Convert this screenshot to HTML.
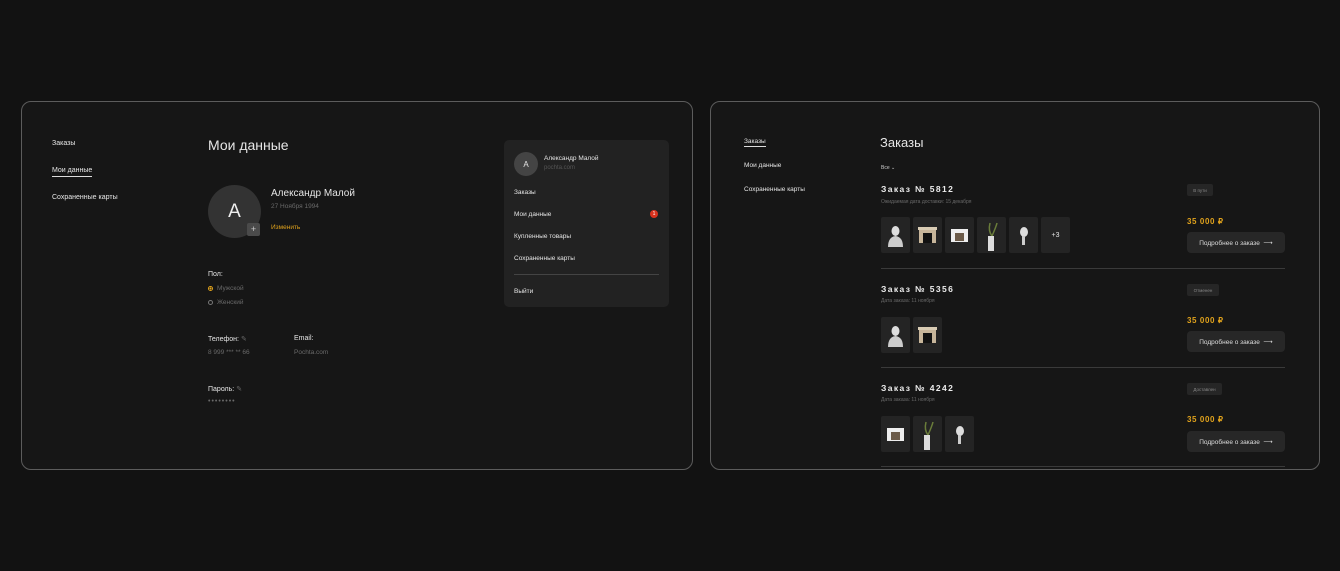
<!DOCTYPE html>
<html><head><meta charset="utf-8"><style>
*{margin:0;padding:0;box-sizing:border-box}
body{width:1340px;height:571px;background:#121212;font-family:"Liberation Sans","Noto Sans CJK SC",sans-serif;color:#e6e6e6;position:relative;overflow:hidden}
.p{position:absolute;background:#161616;border:1px solid #5c5c5c;border-radius:10px;overflow:hidden}
.a{position:absolute;white-space:nowrap}
.s{font-size:7px}
.g{color:#6a6a6a}
.th{position:absolute;width:29px;height:36px;background:#242424;border-radius:2px}
.th svg{width:29px;height:36px}
.btn{position:absolute;width:98px;height:21px;background:#272727;border-radius:4px;font-size:6.5px;color:#ddd;display:flex;align-items:center;justify-content:center}
.tag{position:absolute;height:12px;background:#262626;border-radius:2px;font-size:4.5px;color:#888;display:flex;align-items:center;justify-content:center}
.price{position:absolute;color:#e0a21c;font-size:8px;font-weight:bold;letter-spacing:0.6px}
.ord{position:absolute;font-size:8.5px;font-weight:bold;letter-spacing:1.4px;color:#eee}
.hr{position:absolute;height:1px;background:#3a3a3a}
</style></head><body>
<svg width="0" height="0" style="position:absolute"><defs>
<g id="bust"><ellipse cx="14.5" cy="14" rx="4" ry="5" fill="#ddd"/><path d="M7 30 Q7 20 14.5 19 Q22 20 22 30 Z" fill="#ccc"/></g>
<g id="fp1"><rect x="6" y="11" width="17" height="15" fill="#c7b59a"/><rect x="5" y="10" width="19" height="3" fill="#d9ccb4"/><rect x="10" y="16" width="9" height="10" fill="#111"/></g>
<g id="fp2"><rect x="6" y="12" width="17" height="13" fill="#eee"/><rect x="10" y="16" width="9" height="8" fill="#6b5a48"/></g>
<g id="vase"><path d="M13 6 Q11 14 15 19 M15 19 Q19 10 20 6" stroke="#6a7d3a" stroke-width="1.5" fill="none"/><rect x="11" y="19" width="6" height="15" fill="#ddd"/></g>
<g id="head"><ellipse cx="15" cy="15" rx="4" ry="5" fill="#ddd"/><rect x="13" y="19" width="3" height="9" fill="#ccc"/></g>
</defs></svg>

<div class="p" style="left:21px;top:101px;width:672px;height:369px">
 <div class="a s" style="left:30px;top:38px">Заказы</div>
 <div class="a s" style="left:30px;top:65px;border-bottom:1px solid #ddd;padding-bottom:2px">Мои данные</div>
 <div class="a s" style="left:30px;top:92px">Сохраненные карты</div>
 <div class="a" style="left:186px;top:35px;font-size:14px">Мои данные</div>
 <div class="a" style="left:186px;top:83px;width:53px;height:53px;border-radius:50%;background:#333;font-size:19px;color:#eee;display:flex;align-items:center;justify-content:center">A</div>
 <div class="a" style="left:225px;top:121px;width:13px;height:13px;border-radius:2px;background:#4a4a4a;font-size:9px;color:#ccc;text-align:center;line-height:13px">+</div>
 <div class="a" style="left:249px;top:86px;font-size:10px">Александр Малой</div>
 <div class="a g" style="left:249px;top:101px;font-size:6.5px">27 Ноября 1994</div>
 <div class="a" style="left:249px;top:122px;font-size:6.5px;color:#e0a21c">Изменить</div>
 <div class="a s" style="left:186px;top:169px">Пол:</div>
 <div class="a" style="left:186px;top:184px;width:5px;height:5px;border-radius:50%;border:1px solid #e0a21c;background:radial-gradient(#e0a21c 40%,transparent 50%)"></div>
 <div class="a g" style="left:195px;top:183px;font-size:6.5px">Мужской</div>
 <div class="a" style="left:186px;top:198px;width:5px;height:5px;border-radius:50%;border:1px solid #777"></div>
 <div class="a g" style="left:195px;top:197px;font-size:6.5px">Женский</div>
 <div class="a s" style="left:186px;top:233px">Телефон: <span class="g">✎</span></div>
 <div class="a g" style="left:186px;top:247px;font-size:6.5px">8 999 *** ** 66</div>
 <div class="a s" style="left:272px;top:233px">Email:</div>
 <div class="a g" style="left:272px;top:247px;font-size:6.5px">Pochta.com</div>
 <div class="a s" style="left:186px;top:283px">Пароль: <span class="g">✎</span></div>
 <div class="a g" style="left:186px;top:296px;font-size:7px;letter-spacing:1px">••••••••</div>
 <div class="a" style="left:482px;top:38px;width:165px;height:167px;background:#222;border-radius:5px">
  <div class="a" style="left:10px;top:12px;width:24px;height:24px;border-radius:50%;background:#444;font-size:8px;display:flex;align-items:center;justify-content:center">A</div>
  <div class="a" style="left:40px;top:15px;font-size:6.5px">Александр Малой</div>
  <div class="a" style="left:40px;top:25px;font-size:6px;color:#555">pochta.com</div>
  <div class="a" style="left:10px;top:49px;font-size:6.5px">Заказы</div>
  <div class="a" style="left:10px;top:71px;font-size:6.5px">Мои данные</div>
  <div class="a" style="left:146px;top:70px;width:8px;height:8px;border-radius:50%;background:#d8321e;font-size:5px;color:#fff;text-align:center;line-height:8px">1</div>
  <div class="a" style="left:10px;top:93px;font-size:6.5px">Купленные товары</div>
  <div class="a" style="left:10px;top:115px;font-size:6.5px">Сохраненные карты</div>
  <div class="a" style="left:10px;top:134px;width:145px;height:1px;background:#444"></div>
  <div class="a" style="left:10px;top:148px;font-size:6.5px">Выйти</div>
 </div>
</div>

<div class="p" style="left:710px;top:101px;width:610px;height:369px">
 <div class="a s" style="left:33px;top:36px;border-bottom:1px solid #ddd;padding-bottom:1px;font-size:6.5px">Заказы</div>
 <div class="a" style="left:33px;top:60px;font-size:6.5px">Мои данные</div>
 <div class="a" style="left:33px;top:84px;font-size:6.5px">Сохраненные карты</div>
 <div class="a" style="left:169px;top:33px;font-size:13px">Заказы</div>
 <div class="a" style="left:170px;top:63px;font-size:5px;color:#ccc">Все ⌄</div>
</div>
<div class="ord" style="left:881px;top:184px">Заказ № 5812</div>
<div class="a g" style="left:881px;top:199px;font-size:5px">Ожидаемая дата доставки: 15 декабря</div>
<div class="tag" style="left:1187px;top:184px;width:26px">В пути</div>
<div class="th" style="left:881px;top:217px"><svg><use href="#bust"/></svg></div>
<div class="th" style="left:913px;top:217px"><svg><use href="#fp1"/></svg></div>
<div class="th" style="left:945px;top:217px"><svg><use href="#fp2"/></svg></div>
<div class="th" style="left:977px;top:217px"><svg><use href="#vase"/></svg></div>
<div class="th" style="left:1009px;top:217px"><svg><use href="#head"/></svg></div>
<div class="th" style="left:1041px;top:217px;font-size:7px;display:flex;align-items:center;justify-content:center">+3</div>
<div class="price" style="left:1187px;top:217px">35 000 ₽</div>
<div class="btn" style="left:1187px;top:232px">Подробнее о заказе&nbsp;&nbsp;⟶</div>
<div class="hr" style="left:881px;top:268px;width:404px"></div>

<div class="ord" style="left:881px;top:284px">Заказ № 5356</div>
<div class="a g" style="left:881px;top:298px;font-size:5px">Дата заказа: 11 ноября</div>
<div class="tag" style="left:1187px;top:284px;width:32px">Отменен</div>
<div class="th" style="left:881px;top:317px"><svg><use href="#bust"/></svg></div>
<div class="th" style="left:913px;top:317px"><svg><use href="#fp1"/></svg></div>
<div class="price" style="left:1187px;top:316px">35 000 ₽</div>
<div class="btn" style="left:1187px;top:331px">Подробнее о заказе&nbsp;&nbsp;⟶</div>
<div class="hr" style="left:881px;top:367px;width:404px"></div>

<div class="ord" style="left:881px;top:383px">Заказ № 4242</div>
<div class="a g" style="left:881px;top:397px;font-size:5px">Дата заказа: 11 ноября</div>
<div class="tag" style="left:1187px;top:383px;width:35px">Доставлен</div>
<div class="th" style="left:881px;top:416px"><svg><use href="#fp2"/></svg></div>
<div class="th" style="left:913px;top:416px"><svg><use href="#vase"/></svg></div>
<div class="th" style="left:945px;top:416px"><svg><use href="#head"/></svg></div>
<div class="price" style="left:1187px;top:415px">35 000 ₽</div>
<div class="btn" style="left:1187px;top:431px">Подробнее о заказе&nbsp;&nbsp;⟶</div>
<div class="hr" style="left:881px;top:466px;width:404px"></div>
</body></html>
